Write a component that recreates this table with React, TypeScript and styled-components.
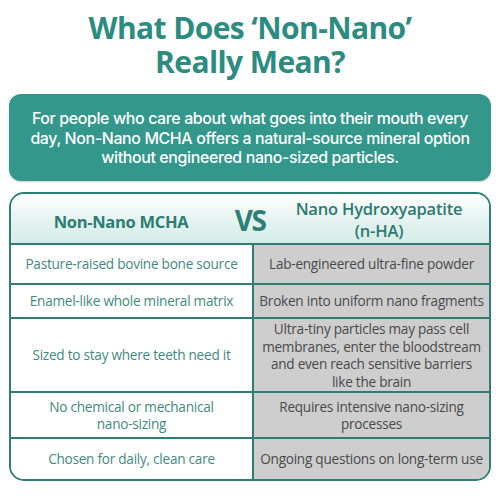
import React from "react";
import styled, { createGlobalStyle } from "styled-components";

const Global = createGlobalStyle`
  html, body { margin: 0; padding: 0; background: #ffffff; }
  body { width: 500px; height: 500px; overflow: hidden; }
`;

const Page = styled.div`
  width: 500px;
  height: 500px;
  box-sizing: border-box;
  padding: 11px 9px 0 9px;
  display: flex;
  flex-direction: column;
  align-items: stretch;
`;

const Title = styled.h1`
  margin: 0;
  font-family: "Open Sans", "DejaVu Sans", sans-serif;
  font-weight: 700;
  font-size: 30px;
  line-height: 34px;
  letter-spacing: -0.6px;
  color: #2c8c7f;
  text-align: center;
`;

const Intro = styled.div`
  margin-top: 15px;
  background: #33978b;
  border-radius: 12px;
  height: 87px;
  box-sizing: border-box;
  display: flex;
  align-items: center;
  justify-content: center;
  box-shadow: 0 1px 2px rgba(0, 0, 0, 0.2);
  padding: 2px 8px 0 8px;
`;

const IntroText = styled.p`
  margin: 0;
  font-family: "Inter", "Liberation Sans", sans-serif;
  font-weight: 500;
  font-size: 15.9px;
  line-height: 19.5px;
  color: #ffffff;
  text-align: center;
  letter-spacing: -0.35px;
`;

const Table = styled.div`
  margin-top: 11px;
  border: 2px solid #2f7e74;
  border-radius: 15px;
  overflow: hidden;
  display: flex;
  flex-direction: column;
`;

const Header = styled.div`
  height: 49px;
  display: grid;
  grid-template-columns: 220px 38px 1fr;
  align-items: center;
  background: linear-gradient(180deg, #ffffff 0%, #e4f3f0 55%, #d6ece8 100%);
  border-bottom: 2px solid #2f7e74;
`;

const HeadLeft = styled.div`
  font-family: "Open Sans", "DejaVu Sans", sans-serif;
  font-weight: 700;
  font-size: 16.5px;
  letter-spacing: -0.3px;
  color: #2c7d72;
  text-align: center;
  padding-top: 6px;
`;

const Vs = styled.div`
  font-family: "Open Sans", "DejaVu Sans", sans-serif;
  font-weight: 700;
  font-size: 28px;
  color: #2c8073;
  text-align: center;
  letter-spacing: -1.5px;
  padding-top: 2px;
`;

const HeadRight = styled.div`
  font-family: "Open Sans", "DejaVu Sans", sans-serif;
  font-weight: 600;
  font-size: 16.5px;
  line-height: 22px;
  letter-spacing: -0.2px;
  color: #2c7a70;
  text-align: center;
  padding-top: 2px;
`;

const Row = styled.div<{ $h: number; $last?: boolean }>`
  height: ${(p) => p.$h}px;
  display: grid;
  grid-template-columns: 241px 1fr;
  border-bottom: ${(p) => (p.$last ? "none" : "2px solid #2f7e74")};
`;

const Cell = styled.div<{ $alt?: boolean }>`
  display: flex;
  align-items: center;
  justify-content: center;
  text-align: center;
  font-family: "Open Sans", "DejaVu Sans", sans-serif;
  font-weight: ${(p) => (p.$alt ? 500 : 400)};
  font-size: 13.6px;
  line-height: 17.5px;
  letter-spacing: -0.25px;
  color: ${(p) => (p.$alt ? "#4a4a4a" : "#3f8a80")};
  background: ${(p) => (p.$alt ? "#cecece" : "#ffffff")};
  border-left: ${(p) => (p.$alt ? "2px solid #2f7e74" : "none")};
  padding: 0;
  white-space: nowrap;
`;

const rows: { h: number; left: React.ReactNode; right: React.ReactNode }[] = [
  { h: 38, left: "Pasture-raised bovine bone source", right: "Lab-engineered ultra-fine powder" },
  { h: 32, left: "Enamel-like whole mineral matrix", right: "Broken into uniform nano fragments" },
  {
    h: 72,
    left: "Sized to stay where teeth need it",
    right: (
      <>
        Ultra-tiny particles may pass cell
        <br />
        membranes, enter the bloodstream
        <br />
        and even reach sensitive barriers
        <br />
        like the brain
      </>
    ),
  },
  {
    h: 44,
    left: (
      <>
        No chemical or mechanical
        <br />
        nano-sizing
      </>
    ),
    right: (
      <>
        Requires intensive nano-sizing
        <br />
        processes
      </>
    ),
  },
  { h: 40, left: "Chosen for daily, clean care", right: "Ongoing questions on long-term use" },
];

export default function App() {
  return (
    <>
      <Global />
      <Page>
        <Title>
          What Does ‘Non-Nano’
          <br />
          Really Mean?
        </Title>
        <Intro>
          <IntroText>
            For people who care about what goes into their mouth every
            <br />
            day, Non-Nano MCHA offers a natural-source mineral option
            <br />
            without engineered nano-sized particles.
          </IntroText>
        </Intro>
        <Table>
          <Header>
            <HeadLeft>Non-Nano MCHA</HeadLeft>
            <Vs>VS</Vs>
            <HeadRight>
              Nano Hydroxyapatite
              <br />
              (n-HA)
            </HeadRight>
          </Header>
          {rows.map((r, i) => (
            <Row key={i} $h={r.h} $last={i === rows.length - 1}>
              <Cell>{r.left}</Cell>
              <Cell $alt>{r.right}</Cell>
            </Row>
          ))}
        </Table>
      </Page>
    </>
  );
}
